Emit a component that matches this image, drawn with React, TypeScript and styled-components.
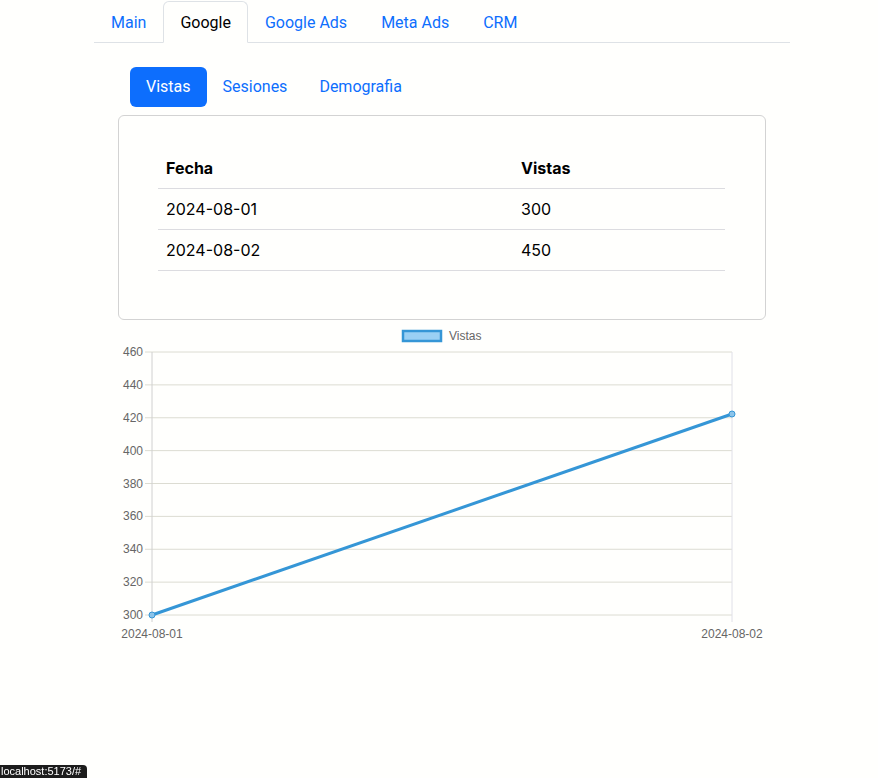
import { useState } from "react";
import styled, { createGlobalStyle } from "styled-components";

const GlobalStyle = createGlobalStyle`
  html, body {
    margin: 0;
    padding: 0;
    background-color: #fffffd;
  }
  body {
    font-family: Roboto, "Liberation Sans", Arial, sans-serif;
    color: #212529;
  }
`;

const Page = styled.div`
  width: 696px;
  padding-left: 94px;
  min-height: 778px;
  box-sizing: content-box;
`;

const Tabs = styled.ul`
  display: flex;
  list-style: none;
  margin: 0;
  padding: 1px 0 0 0;
  border-bottom: 1px solid #dee2e6;
`;

const Tab = styled.li<{ $active?: boolean }>`
  margin-bottom: -1px;
  padding: 10px 16px 8px;
  font-size: 16px;
  line-height: 22px;
  cursor: pointer;
  border: 1px solid ${(p) => (p.$active ? "#dee2e6" : "transparent")};
  border-bottom-color: ${(p) => (p.$active ? "#fffffd" : "transparent")};
  border-radius: 6px 6px 0 0;
  color: ${(p) => (p.$active ? "#000" : "#0d6efd")};
  background: ${(p) => (p.$active ? "#fffffd" : "transparent")};
`;

const Body = styled.div`
  padding: 24px 24px 0;
`;

const Pills = styled.div`
  display: flex;
  padding-left: 12px;
  margin-bottom: 8px;
`;

const Pill = styled.button<{ $active?: boolean }>`
  border: none;
  font-family: inherit;
  font-size: 16px;
  line-height: 24px;
  padding: 8px 16px;
  border-radius: 6px;
  cursor: pointer;
  background: ${(p) => (p.$active ? "#0d6efd" : "transparent")};
  color: ${(p) => (p.$active ? "#fff" : "#0d6efd")};
`;

const Card = styled.div`
  border: 1px solid #d3d3d3;
  border-radius: 6px;
  padding: 32px 40px 32px 39px;
`;

const Table = styled.table`
  width: 100%;
  border-collapse: collapse;
  font-family: Inter, "Liberation Sans", Arial, sans-serif;
  font-size: 16px;
  color: #000;
  margin-bottom: 16px;
`;

const Th = styled.th<{ $w?: number }>`
  text-align: left;
  font-weight: 700;
  padding: 8px;
  height: 24px;
  line-height: 24px;
  border-bottom: 1px solid #dcdce0;
  width: ${(p) => (p.$w ? `${p.$w}px` : "auto")};
`;

const Td = styled.td`
  padding: 8px;
  line-height: 24px;
  border-bottom: 1px solid #dcdce0;
`;

const ChartBox = styled.div`
  margin-top: 5px;
  width: 648px;
  height: 320px;
`;

const StatusBar = styled.div`
  position: fixed;
  left: 0;
  bottom: 0;
  height: 13px;
  padding: 0 6px 0 1px;
  background: #1c1c1c;
  color: #fff;
  font-family: "Liberation Sans", Arial, sans-serif;
  font-size: 11px;
  line-height: 13px;
  border-top-right-radius: 4px;
`;

const rows = [
  { fecha: "2024-08-01", vistas: 300 },
  { fecha: "2024-08-02", vistas: 450 },
];

const BLUE = "#3596d6";
const TEXT = "#666";

const LineChart = () => {
  const top = 27;
  const bottom = 290;
  const left = 34;
  const right = 614;
  const step = (bottom - top) / 8;
  const ticks = [460, 440, 420, 400, 380, 360, 340, 320, 300];
  const endY = 89;

  return (
    <svg width="648" height="320" viewBox="0 0 648 320">
      <rect x="285" y="6" width="38" height="10" fill="rgba(54,162,235,0.5)" stroke={BLUE} strokeWidth="2.5" />
      <text x="331" y="15" fontSize="12" fill={TEXT} fontFamily="Liberation Sans, Arial, sans-serif">
        Vistas
      </text>
      {ticks.map((t, i) => {
        const y = top + i * step;
        return (
          <g key={t}>
            <line x1={left - 7} x2={right} y1={y} y2={y} stroke="#dcdcd2" strokeWidth="1" />
            <text
              x={left - 9}
              y={y + 4}
              fontSize="12"
              fill={TEXT}
              textAnchor="end"
              fontFamily="Liberation Sans, Arial, sans-serif"
            >
              {t}
            </text>
          </g>
        );
      })}
      <line x1={left} x2={left} y1={top} y2={bottom + 7} stroke="#d0d0d0" />
      <line x1={right} x2={right} y1={top} y2={bottom + 7} stroke="#e0e0e8" />
      <text x={left} y="313" fontSize="12" fill={TEXT} textAnchor="middle" fontFamily="Liberation Sans, Arial, sans-serif">
        2024-08-01
      </text>
      <text x={right} y="313" fontSize="12" fill={TEXT} textAnchor="middle" fontFamily="Liberation Sans, Arial, sans-serif">
        2024-08-02
      </text>
      <line x1={left} y1={bottom} x2={right} y2={endY} stroke={BLUE} strokeWidth="3" />
      <circle cx={left} cy={bottom} r="3" fill="#8cc4ea" stroke={BLUE} strokeWidth="1" />
      <circle cx={right} cy={endY} r="3" fill="#8cc4ea" stroke={BLUE} strokeWidth="1" />
    </svg>
  );
};

const App = () => {
  const [tab, setTab] = useState("Google");
  const [pill, setPill] = useState("Vistas");

  return (
    <>
      <GlobalStyle />
      <Page>
        <Tabs>
          {["Main", "Google", "Google Ads", "Meta Ads", "CRM"].map((t) => (
            <Tab key={t} $active={tab === t} onClick={() => setTab(t)}>
              {t}
            </Tab>
          ))}
        </Tabs>
        <Body>
          <Pills>
            {["Vistas", "Sesiones", "Demografia"].map((p) => (
              <Pill key={p} $active={pill === p} onClick={() => setPill(p)}>
                {p}
              </Pill>
            ))}
          </Pills>
          <Card>
            <Table>
              <thead>
                <tr>
                  <Th $w={339}>Fecha</Th>
                  <Th>Vistas</Th>
                </tr>
              </thead>
              <tbody>
                {rows.map((r) => (
                  <tr key={r.fecha}>
                    <Td>{r.fecha}</Td>
                    <Td>{r.vistas}</Td>
                  </tr>
                ))}
              </tbody>
            </Table>
          </Card>
          <ChartBox>
            <LineChart />
          </ChartBox>
        </Body>
      </Page>
      <StatusBar>localhost:5173/#</StatusBar>
    </>
  );
};

export default App;
